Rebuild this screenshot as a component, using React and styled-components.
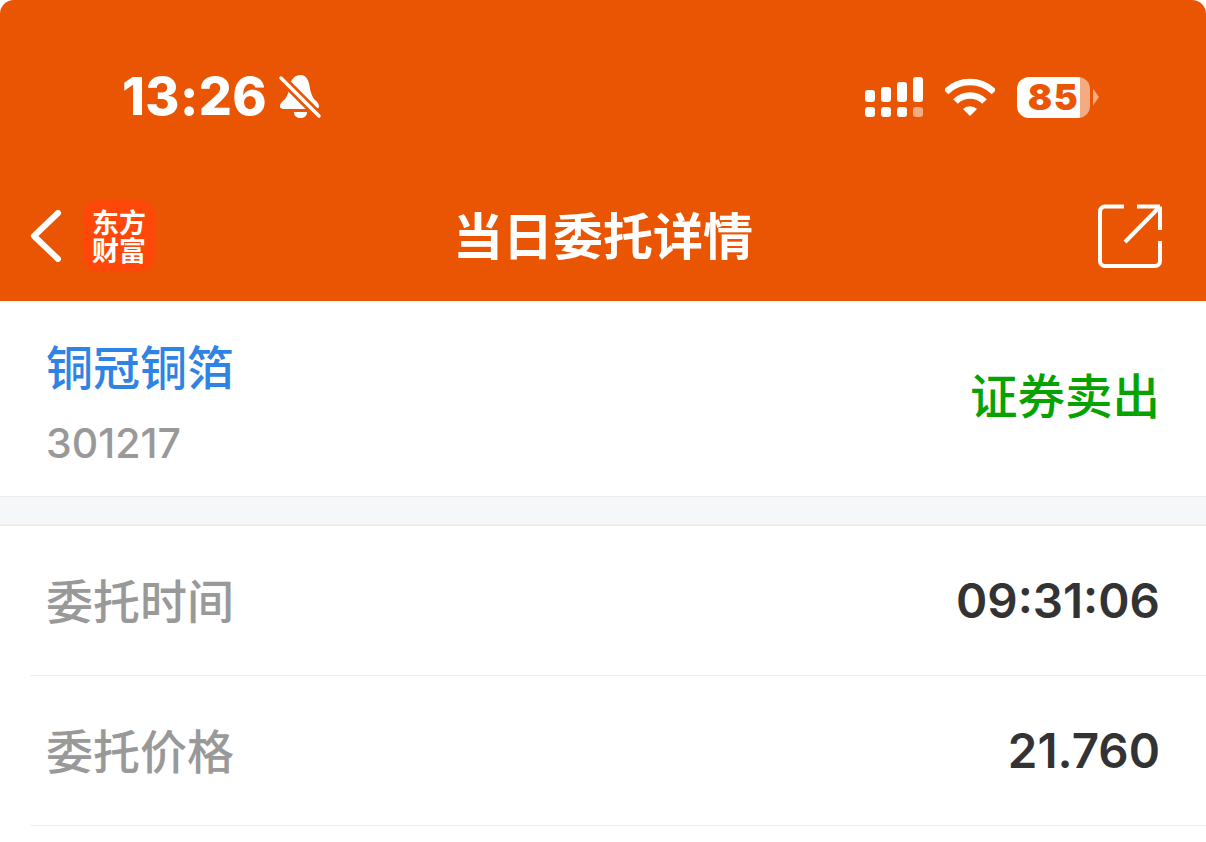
import React from "react";
import styled, { createGlobalStyle } from "styled-components";

const cjk = `"Noto Sans CJK SC", sans-serif`;
const latin = `Inter, "Noto Sans CJK SC", sans-serif`;

const Global = createGlobalStyle`
  html, body {
    margin: 0;
    padding: 0;
    background: #ffffff;
    overflow: hidden;
  }
  * {
    box-sizing: border-box;
  }
`;

const Page = styled.div`
  width: 1206px;
  height: 842px;
  overflow: hidden;
  background: #ffffff;
`;

const Header = styled.header`
  height: 301px;
  background: #ea5504;
  border-radius: 14px 14px 0 0;
  display: flex;
  flex-direction: column;
`;

const StatusBar = styled.div`
  height: 190px;
  padding: 4px 108px 0 122px;
  display: flex;
  align-items: center;
  justify-content: space-between;
`;

const StatusLeft = styled.div`
  display: flex;
  align-items: center;
  gap: 11px;
  color: #ffffff;
`;

const Clock = styled.span`
  font: 800 52px/1 ${latin};
  letter-spacing: 0.4px;
`;

const StatusRight = styled.div`
  display: flex;
  align-items: center;
  gap: 22px;
`;

const Battery = styled.div`
  position: relative;
  width: 73px;
  height: 41px;
  margin-right: 8px;
  border-radius: 12px;
  background: linear-gradient(to right, #ffffff 0 63px, #f5ab81 63px);
  color: #ea5504;
  font: 900 36px/41px ${latin};
  text-align: center;
  letter-spacing: 1.500px;
  &::after {
    content: "";
    position: absolute;
    right: -9px;
    top: 12px;
    width: 6px;
    height: 17px;
    background: #f5ab81;
    clip-path: polygon(0 0, 100% 50%, 0 100%);
  }
`;

const NavBar = styled.div`
  flex: 1;
  position: relative;
  display: flex;
  align-items: center;
  justify-content: space-between;
  padding: 0 44px 20px 30px;
`;

const NavLeft = styled.div`
  display: flex;
  align-items: center;
  gap: 21px;
`;

const AppLogo = styled.div`
  width: 72px;
  height: 72px;
  border-radius: 16px;
  background: #fd4809;
  color: #ffffff;
  font: 700 27px/28px ${cjk};
  text-align: center;
  display: flex;
  flex-direction: column;
  justify-content: center;
`;

const NavTitle = styled.h1`
  position: absolute;
  left: 0;
  right: 0;
  top: 16px;
  margin: 0;
  text-align: center;
  color: #ffffff;
  font: 700 50px/54px ${cjk};
  letter-spacing: 0;
`;

const StockRow = styled.section`
  height: 196px;
  border-bottom: 1px solid #e9ebee;
  padding: 33px 46px 0;
  display: flex;
  justify-content: space-between;
`;

const StockInfo = styled.div`
  display: flex;
  flex-direction: column;
  gap: 25px;
`;

const StockName = styled.div`
  color: #2f83e4;
  font: 500 47px/62px ${cjk};
`;

const StockCode = styled.div`
  color: #999999;
  font: 500 41px/44px ${latin};
`;

const Side = styled.div`
  color: #06a300;
  font: 500 47.500px/62px ${cjk};
  margin-top: 29px;
`;

const Gap = styled.div`
  height: 29px;
  background: #f6f7f9;
  border-bottom: 2px solid #efecea;
`;

const Row = styled.div`
  height: 150px;
  margin-left: 30px;
  padding: 0 46px 0 16px;
  border-bottom: 1px solid #eeeeee;
  display: flex;
  align-items: center;
  justify-content: space-between;
`;

const Label = styled.span`
  color: #999999;
  font: 500 47px/62px ${cjk};
  margin-bottom: 4px;
`;

const Value = styled.span`
  color: #333333;
  font: 600 47.500px/62px ${latin};
`;

function Bell() {
  return (
    <svg width="44" height="46" viewBox="0 0 44 46">
      <path
        d="M23 1c-6 0-10 4-11 10-1 6-2 10-5 14-2 2-5 4-5 7 0 3 2 3 5 3h28c3 0 6 0 6-3 0-3-3-5-5-7-2-3-3-6-4-10-1-9-4-14-9-14z"
        fill="#fff"
      />
      <path d="M16 38h13c0 4-3 6-6.500 6S16 42 16 38z" fill="#fff" />
      <path d="M3 4l38 38" stroke="#ea5504" strokeWidth="9" />
      <path d="M3 4l38 38" stroke="#fff" strokeWidth="3.500" strokeLinecap="round" />
    </svg>
  );
}

function Signal() {
  const top = [
    [0, 13, 12],
    [16, 10, 15],
    [32, 5, 20],
    [48, 0, 25],
  ];
  return (
    <svg width="58" height="40" viewBox="0 0 58 40">
      {top.map(([x, y, h]) => (
        <rect key={x} x={x} y={y} width="10" height={h} rx="3" fill="#fff" />
      ))}
      {[0, 16, 32].map((x) => (
        <rect key={x} x={x} y="30" width="10" height="10" rx="3" fill="#fff" />
      ))}
      <rect x="48" y="30" width="10" height="10" rx="3" fill="#f5ab81" />
    </svg>
  );
}

function Wifi() {
  return (
    <svg width="50" height="38" viewBox="0 0 50 38">
      <path d="M1 14A34 34 0 0 1 49 14" fill="none" stroke="#fff" strokeWidth="6.500" />
      <path d="M10.500 23.500A20.500 20.500 0 0 1 39.500 23.500" fill="none" stroke="#fff" strokeWidth="6.500" />
      <path d="M25 38L18 31A10 10 0 0 1 32 31z" fill="#fff" />
    </svg>
  );
}

function Back() {
  return (
    <svg width="32" height="52" viewBox="0 0 32 52">
      <path d="M28 3L4 26l24 23" fill="none" stroke="#fff" strokeWidth="6" strokeLinecap="round" strokeLinejoin="round" />
    </svg>
  );
}

function Share() {
  return (
    <svg width="64" height="64" viewBox="0 0 64 64">
      <path
        d="M26 2.500H7a5 5 0 0 0-5 5V57a5 5 0 0 0 5 5h50a5 5 0 0 0 5-5V37M62 26V2.500M39 2.500h23M62 2.500L27 38"
        fill="none"
        stroke="#fff"
        strokeWidth="4"
      />
    </svg>
  );
}

export default function App() {
  return (
    <Page>
      <Global />
      <Header>
        <StatusBar>
          <StatusLeft>
            <Clock>13:26</Clock>
            <Bell />
          </StatusLeft>
          <StatusRight>
            <Signal />
            <Wifi />
            <Battery>85</Battery>
          </StatusRight>
        </StatusBar>
        <NavBar>
          <NavLeft>
            <Back />
            <AppLogo>
              <span>东方</span>
              <span>财富</span>
            </AppLogo>
          </NavLeft>
          <NavTitle>当日委托详情</NavTitle>
          <Share />
        </NavBar>
      </Header>
      <StockRow>
        <StockInfo>
          <StockName>铜冠铜箔</StockName>
          <StockCode>301217</StockCode>
        </StockInfo>
        <Side>证券卖出</Side>
      </StockRow>
      <Gap />
      <Row>
        <Label>委托时间</Label>
        <Value>09:31:06</Value>
      </Row>
      <Row>
        <Label>委托价格</Label>
        <Value>21.760</Value>
      </Row>
    </Page>
  );
}
